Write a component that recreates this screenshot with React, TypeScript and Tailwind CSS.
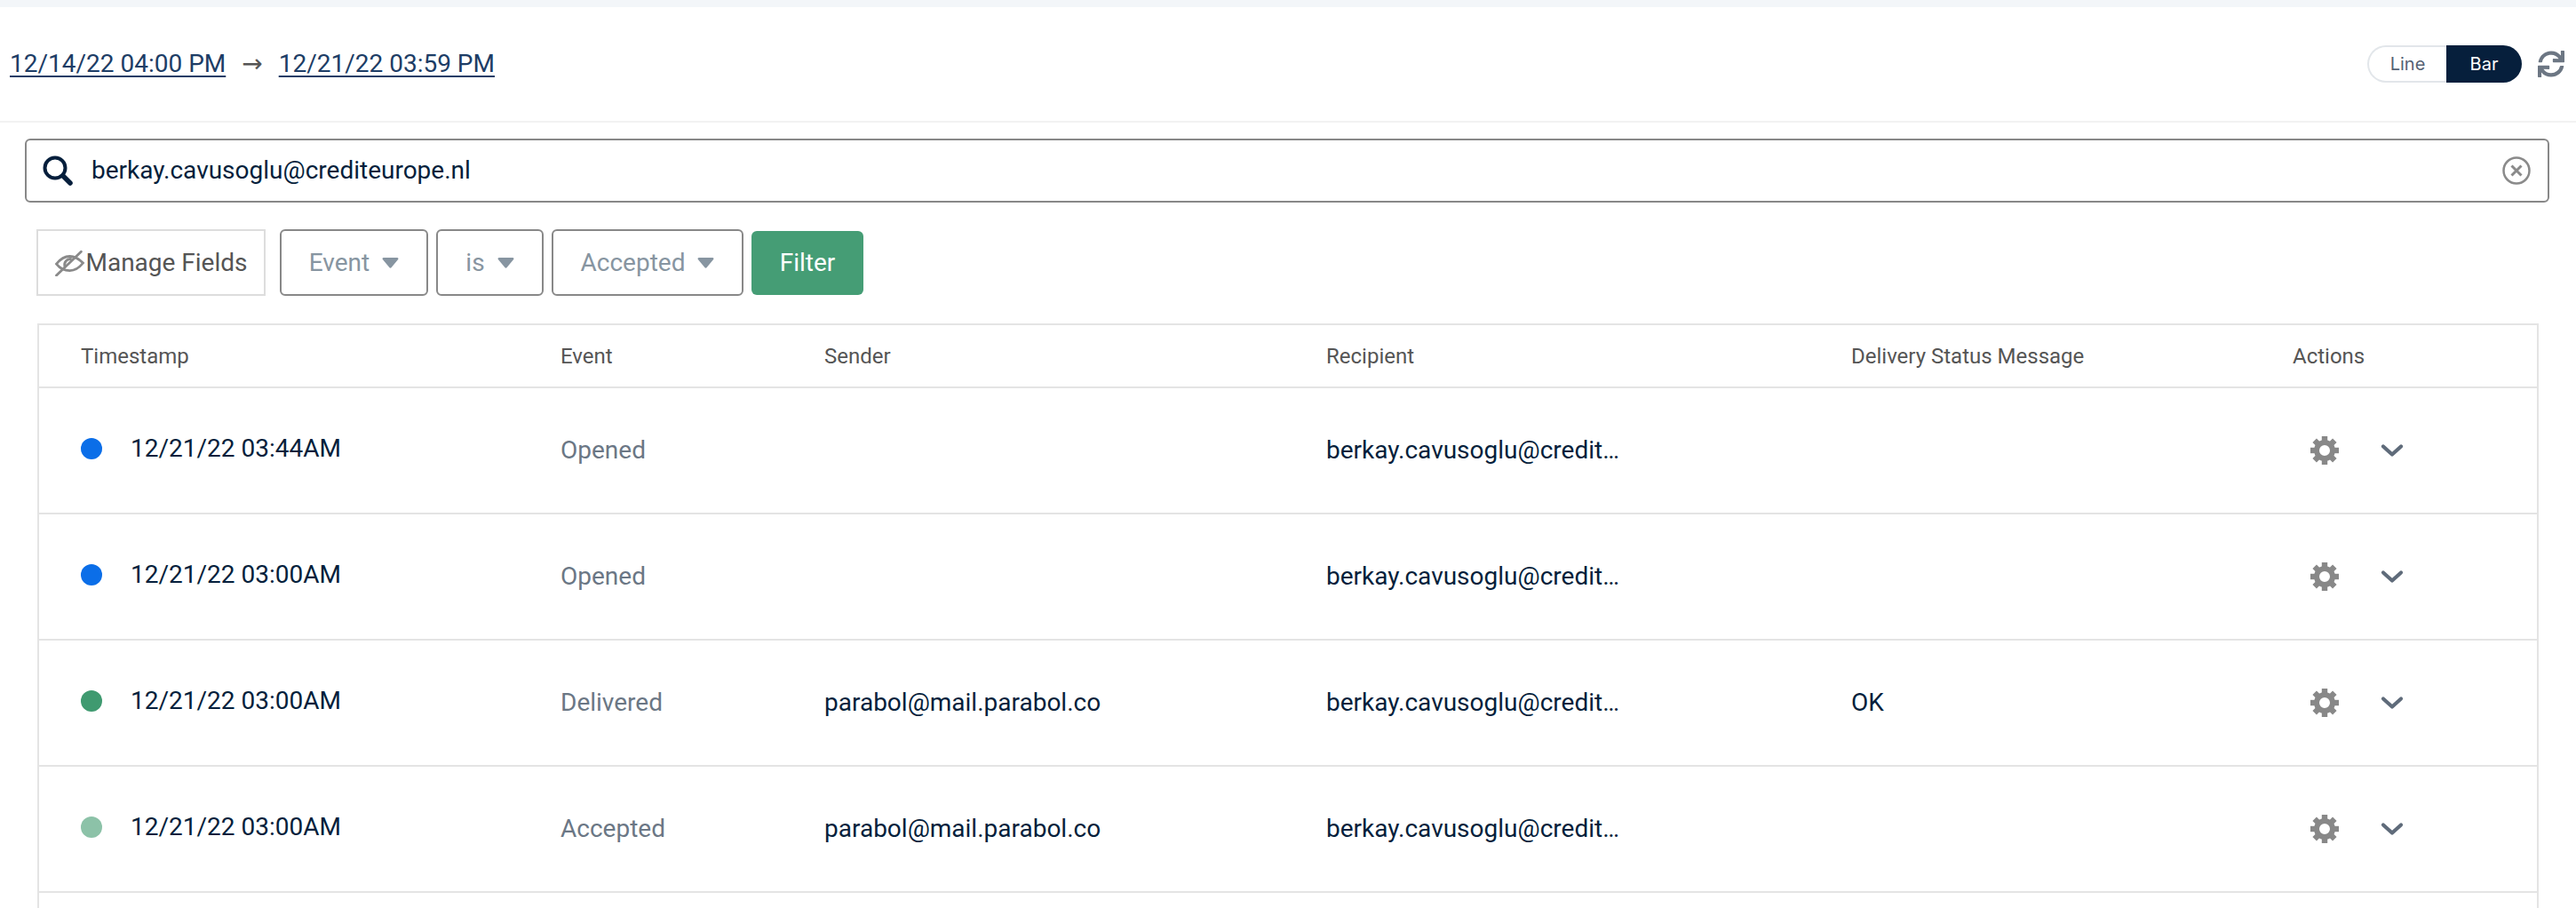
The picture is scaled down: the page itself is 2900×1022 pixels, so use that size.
import { FaSync } from "react-icons/fa";

const rows = [
  { time: "12/21/22 03:44AM", event: "Opened", sender: "", status: "", dot: "bg-[#0b6ee8]" },
  { time: "12/21/22 03:00AM", event: "Opened", sender: "", status: "", dot: "bg-[#0b6ee8]" },
  { time: "12/21/22 03:00AM", event: "Delivered", sender: "parabol@mail.parabol.co", status: "OK", dot: "bg-[#3f9a70]" },
  { time: "12/21/22 03:00AM", event: "Accepted", sender: "parabol@mail.parabol.co", status: "", dot: "bg-[#8cc2a8]" },
];

const gridCols = "grid grid-cols-[540px_297px_565px_591px_497px_1fr] items-center pl-[47px]";

const Caret = () => (
  <svg viewBox="0 0 16 10" className="h-[12px] w-[19px]" fill="currentColor">
    <path d="M1.5 0h13c1 0 1.4 1 .8 1.7L8.8 9.4c-.4.5-1.2.5-1.6 0L.7 1.7C.1 1 .5 0 1.5 0z" />
  </svg>
);

const SearchIcon = () => (
  <svg viewBox="0 0 34 34" className="h-[34px] w-[34px]" fill="none" stroke="#061f3c">
    <circle cx="14" cy="14" r="11.5" strokeWidth="4" />
    <path d="M23 23l8 8" strokeWidth="5.5" strokeLinecap="round" />
  </svg>
);

const EyeSlash = () => (
  <svg viewBox="0 0 32 28" className="h-[30px] w-[35px]" fill="none" stroke="#8a8a8a" strokeWidth="2.6">
    <path d="M2 15c4-5 9-8 14-8s10 3 14 7c-4 5-9 8-14 8S6 20 2 15z" />
    <path d="M11 18a6 6 0 0 1 7-8" />
    <path d="M2 27 28 2" strokeLinecap="round" />
  </svg>
);

const ClearIcon = () => (
  <svg viewBox="0 0 32 32" className="h-[32px] w-[32px]" fill="none" stroke="#8a8a8a" strokeWidth="2.5">
    <circle cx="16" cy="16" r="14.5" />
    <path d="M10.5 10.5l11 11M21.5 10.5l-11 11" strokeWidth="3" />
  </svg>
);

const GearIcon = () => (
  <svg viewBox="0 0 32 32" className="ml-[20px] h-[32px] w-[32px]" fill="#888888">
    <circle cx="16" cy="16" r="9" fill="none" stroke="#888888" strokeWidth="6" />
    {[0, 45, 90, 135, 180, 225, 270, 315].map((angle) => (
      <rect key={angle} x="12.8" y="0" width="6.4" height="6" transform={`rotate(${angle} 16 16)`} />
    ))}
  </svg>
);

const ChevronIcon = () => (
  <svg viewBox="0 0 24 14" className="ml-[48px] h-[14px] w-[24px] overflow-visible" fill="none" stroke="#5f6b7a" strokeWidth="4.2">
    <path d="M2 2.500 12 11.500l10-9" strokeLinecap="round" strokeLinejoin="round" />
  </svg>
);

const FilterSelect = ({ label, width }: { label: string; width: string }) => (
  <div
    className={`flex h-[75px] items-center justify-center gap-[14px] rounded-[6px] border-2 border-[#888888] text-[28px] text-[#8795a1] ${width}`}
  >
    <span>{label}</span>
    <Caret />
  </div>
);

const App = () => {
  return (
    <div className="h-[1022px] w-[2900px] overflow-hidden bg-white font-['Roboto',sans-serif]">
      <div className="h-[8px] bg-[#f3f6f9]" />
      <div className="flex h-[130px] items-center justify-between border-b-2 border-[#f2f2f2] pl-[11px] pr-[13px]">
        <div className="flex items-center text-[28px] text-[#1d3d66]">
          <span className="underline underline-offset-4">12/14/22 04:00 PM</span>
          <span className="mx-[18px] font-['DejaVu_Sans',sans-serif] text-[#555555]">→</span>
          <span className="underline underline-offset-4">12/21/22 03:59 PM</span>
        </div>
        <div className="flex items-center gap-[18px]">
          <div className="flex h-[42px] w-[174px] font-['Inter',sans-serif] text-[20px]">
            <div className="flex w-[89px] items-center justify-center rounded-l-full border-2 border-r-0 border-[#e2e6ea] text-[#566275]">
              Line
            </div>
            <div className="flex flex-1 items-center justify-center rounded-r-full bg-[#061f3c] text-white">Bar</div>
          </div>
          <FaSync className="h-[30px] w-[30px] text-[#6c7683]" />
        </div>
      </div>

      <div className="ml-[28px] mt-[18px] flex h-[72px] w-[2842px] items-center rounded-[6px] border-2 border-[#888888] pl-[18px] pr-[19px]">
        <SearchIcon />
        <span className="ml-[21px] flex-1 text-[28px] text-[#061f3c]">berkay.cavusoglu@crediteurope.nl</span>
        <ClearIcon />
      </div>

      <div className="ml-[41px] mt-[30px] flex items-center">
        <div className="flex h-[75px] w-[258px] items-center justify-center border-2 border-[#dddddd] text-[28px] text-[#555555]">
          <EyeSlash />
          <span>Manage Fields</span>
        </div>
        <div className="ml-[16px] flex items-center gap-[9px]">
          <FilterSelect label="Event" width="w-[167px]" />
          <FilterSelect label="is" width="w-[121px]" />
          <FilterSelect label="Accepted" width="w-[216px]" />
          <button className="flex h-[72px] w-[126px] items-center justify-center rounded-[6px] bg-[#459d75] text-[28px] text-white">
            Filter
          </button>
        </div>
      </div>

      <div className="ml-[42px] mt-[31px] w-[2816px] border-x-2 border-t-2 border-[#e4e4e4]">
        <div className={`${gridCols} h-[71px] border-b-2 border-[#e4e4e4] text-[24px] text-[#555555]`}>
          <span>Timestamp</span>
          <span>Event</span>
          <span>Sender</span>
          <span>Recipient</span>
          <span>Delivery Status Message</span>
          <span>Actions</span>
        </div>
        {rows.map((row, index) => (
          <div key={index} className={`${gridCols} h-[142px] border-b-2 border-[#e4e4e4] text-[28px] text-[#061f3c]`}>
            <div className="-mt-[4px] flex items-center gap-[32px]">
              <span className={`h-[24px] w-[24px] rounded-full ${row.dot}`} />
              <span>{row.time}</span>
            </div>
            <span className="text-[#6b7785]">{row.event}</span>
            <span>{row.sender}</span>
            <span className="w-[330px] truncate">berkay.cavusoglu@crediteurope.nl</span>
            <span>{row.status}</span>
            <div className="flex items-center">
              <GearIcon />
              <ChevronIcon />
            </div>
          </div>
        ))}
        <div className="h-[142px]" />
      </div>
    </div>
  );
};

export default App;
